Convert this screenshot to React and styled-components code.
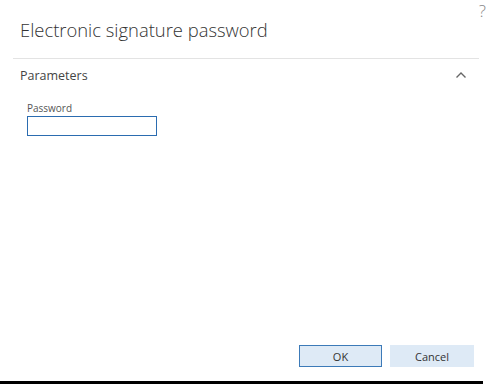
import React from 'react'
import styled, { createGlobalStyle } from 'styled-components'

const Global = createGlobalStyle`
html,body{
margin:0;
padding:0;
background:#fff;
}
body{
font-family:'Open Sans','Noto Sans',sans-serif;
}
`

const Dialog = styled.div`
position:relative;
box-sizing:border-box;
width:483px;
height:384px;
border-bottom:3px solid #000;
display:flex;
flex-direction:column;
background:#fff;
`

const Help = styled.div`
position:absolute;
top:0px;
right:-3px;
font-size:17px;
line-height:22px;
font-weight:300;
color:#888;
`

const Title = styled.h1`
margin:0;
padding:18px 0 0 20px;
height:58px;
box-sizing:border-box;
font-size:18.4px;
line-height:24px;
font-weight:300;
color:#333;
`

const Divider = styled.div`
margin:0 4px 0 13px;
height:1px;
background:#e3e3e3;
`

const SectionHeader = styled.div`
display:flex;
justify-content:space-between;
align-items:center;
padding:5px 16px 0 20px;
height:22px;
font-size:12.5px;
color:#444;
`

const Fields = styled.div`
padding:16px 0 0 27px;
display:flex;
flex-direction:column;
`

const Label = styled.label`
font-size:10px;
color:#555;
line-height:12px;
margin-bottom:2px;
`

const Input = styled.input`
box-sizing:border-box;
width:130px;
height:20px;
border:1px solid #2b6cb0;
outline:none;
padding:0 4px;
margin:0;
`

const Spacer = styled.div`
flex:1;
`

const Footer = styled.div`
display:flex;
justify-content:flex-end;
gap:8px;
padding:0 9px 14px 0;
`

const Button = styled.button`
box-sizing:border-box;
width:${p => p.$w}px;
height:22px;
margin-left:${p => (p.$primary ? 1 : 0)}px;
border:1px solid ${p => (p.$primary ? '#3c7ab8' : '#deeaf6')};
background:#deeaf6;
font-family:'Open Sans','Noto Sans',sans-serif;
font-size:11px;
color:#333;
padding:0;
`

export default function App() {
  return (
    <>
      <Global />
      <Dialog>
        <Help>?</Help>
        <Title>Electronic signature password</Title>
        <Divider />
        <SectionHeader>
          <span>Parameters</span>
          <svg width="12" height="8" viewBox="0 0 12 8">
            <path d="M1.5 6.5 L6 2 L10.5 6.5" fill="none" stroke="#666" strokeWidth="1.4" />
          </svg>
        </SectionHeader>
        <Fields>
          <Label>Password</Label>
          <Input type="password" />
        </Fields>
        <Spacer />
        <Footer>
          <Button $primary $w={83}>OK</Button>
          <Button $w={84}>Cancel</Button>
        </Footer>
      </Dialog>
    </>
  )
}
